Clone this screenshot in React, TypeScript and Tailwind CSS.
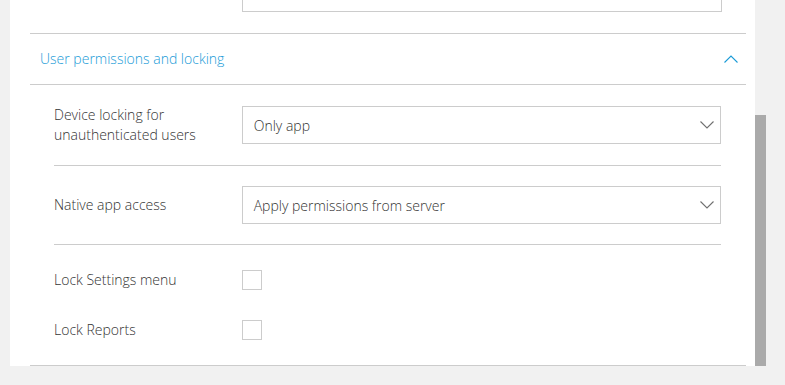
const font = { fontFamily: '"Open Sans", "Liberation Sans", sans-serif' };

function Chevron({ up, className }: { up?: boolean; className?: string }) {
  return (
    <svg width="14" height="8" viewBox="0 0 14 8" fill="none" className={className}>
      <path
        d={up ? 'M0.5 7.5 L7 1 L13.5 7.5' : 'M0.5 0.5 L7 7 L13.5 0.5'}
        stroke="currentColor"
        strokeWidth="1.1"
      />
    </svg>
  );
}

function SelectBox({ value }: { value: string }) {
  return (
    <div className="flex h-[38px] w-[480px] items-center justify-between border border-[#cccccc] bg-white pl-[11px] pr-[6px] text-[14px] text-[#333333]">
      <span>{value}</span>
      <Chevron className="text-[#707070]" />
    </div>
  );
}

function CheckRow({ label }: { label: string }) {
  return (
    <div className="flex h-[50px] items-center">
      <span className="-mt-[1px] w-[188px] text-[14px] text-[#333333]">{label}</span>
      <div className="h-5 w-5 border border-[#cccccc] bg-white" />
    </div>
  );
}

export default function App() {
  return (
    <div className="flex h-[385px] w-[785px] overflow-hidden bg-[#f1f1f1] font-light" style={font}>
      <div className="ml-[10px] flex h-[366px] w-[745px] flex-col bg-white">
        {/* tail of previous section */}
        <div className="flex h-[33px] items-end pb-[21px] pl-[232px]">
          <div className="h-[30px] w-[480px] border-x border-b border-[#cccccc]" />
        </div>

        {/* section header */}
        <div className="ml-[20px] mr-[9px] flex h-[52px] items-center justify-between border-y border-[#cccccc] pl-[10px] pr-[8px]">
          <span className="text-[14px] leading-[20px] text-[#1a9bd7]">User permissions and locking</span>
          <Chevron up className="text-[#1a9bd7]" />
        </div>

        <div className="flex flex-1 flex-col pl-[44px] pr-[34px]">
          <div className="flex h-[81px] items-center border-b border-[#cccccc]">
            <span className="w-[188px] text-[14px] leading-[20px] text-[#333333]">
              Device locking for
              <br />
              unauthenticated users
            </span>
            <SelectBox value="Only app" />
          </div>

          <div className="flex h-[79px] items-center border-b border-[#cccccc]">
            <span className="-mt-[2px] w-[188px] text-[14px] text-[#333333]">Native app access</span>
            <SelectBox value="Apply permissions from server" />
          </div>

          <div className="flex flex-col pt-[10px]">
            <CheckRow label="Lock Settings menu" />
            <CheckRow label="Lock Reports" />
          </div>
        </div>

        <div className="ml-[20px] mr-[9px] border-b border-[#cccccc]" />
      </div>

      {/* scrollbar */}
      <div className="flex w-[11px] flex-col pt-[115px]">
        <div className="h-[251px] bg-[#aaaaaa]" />
      </div>
    </div>
  );
}
